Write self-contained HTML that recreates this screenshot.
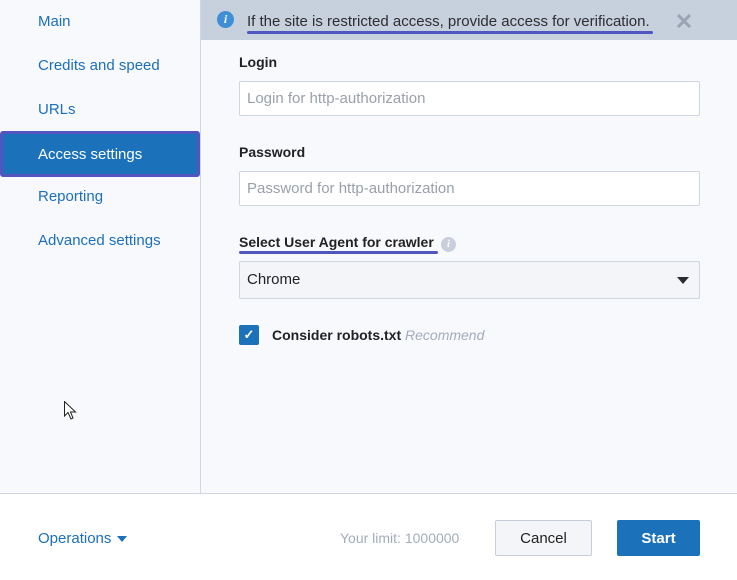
<!DOCTYPE html>
<html><head><style>
*{margin:0;padding:0;box-sizing:border-box}
body{width:737px;height:580px;overflow:hidden;background:#f8f9fd;font-family:"Liberation Sans",sans-serif;position:relative}
.side{position:absolute;left:0;top:0;width:201px;height:493px;border-right:1px solid #cfd6e2;background:#f8f9fd}
.side a{position:absolute;left:38px;font-size:15px;color:#1c6fbb}
.active{position:absolute;left:0;top:131px;width:200px;height:46px;background:#1c71bb;border:3px solid #5254c0;border-radius:3px}
.active span{position:absolute;left:35px;top:12px;color:#fff;font-size:15px}
.banner{position:absolute;left:201px;top:0;width:536px;height:40px;background:#c7d0dd}
.t{position:absolute;font-size:15px;color:#2d2d33}
.lbl{position:absolute;left:239px;font-size:14px;font-weight:bold;color:#222}
.inp{position:absolute;left:239px;width:461px;height:35px;border:1px solid #cfd5df;background:#fff;border-radius:2px;font-size:15px;color:#9aa0aa;padding:8px 7px}
.foot{position:absolute;left:0;top:493px;width:737px;height:87px;background:#fff;border-top:1px solid #cfd6e2}
</style></head><body>
<div class="side">
<a style="top:13px">Main</a>
<a style="top:57px">Credits and speed</a>
<a style="top:101px">URLs</a>
<a style="top:188px">Reporting</a>
<a style="top:232px">Advanced settings</a>
</div>
<div class="active"><span>Access settings</span></div>
<div class="banner">
<div style="position:absolute;left:16px;top:11px;width:17px;height:17px;border-radius:50%;background:#3f8ed6;color:#fff;font:italic bold 12px 'Liberation Serif',serif;text-align:center;line-height:17px">i</div>
<div class="t" style="left:46px;top:13px;font-size:15px">If the site is restricted access, provide access for verification.</div>
<div style="position:absolute;left:46px;top:31px;width:406px;height:3px;background:#5056c0;border-radius:2px"></div>
<svg style="position:absolute;left:476px;top:14px" width="14" height="14" viewBox="0 0 14 14"><path d="M1 1L13 13M13 1L1 13" stroke="#9aa4b3" stroke-width="3"/></svg>
</div>
<div class="lbl" style="top:54px">Login</div>
<div class="inp" style="top:81px">Login for http-authorization</div>
<div class="lbl" style="top:144px">Password</div>
<div class="inp" style="top:171px">Password for http-authorization</div>
<div class="lbl" style="top:234px">Select User Agent for crawler</div>
<div style="position:absolute;left:239px;top:251px;width:199px;height:3px;background:#5056c0;border-radius:2px"></div>
<div style="position:absolute;left:441px;top:237px;width:15px;height:15px;border-radius:50%;background:#c8cfda;color:#fff;font:italic bold 11px 'Liberation Serif',serif;text-align:center;line-height:15px">i</div>
<div class="inp" style="top:261px;height:38px;background:#f4f5f8;color:#222;padding-top:9px">Chrome</div>
<div style="position:absolute;left:677px;top:277px;border-left:6px solid transparent;border-right:6px solid transparent;border-top:7px solid #2a2a30"></div>
<div style="position:absolute;left:239px;top:325px;width:20px;height:20px;background:#1c71bb;border-radius:2px;color:#fff;font-size:13px;text-align:center;line-height:20px;font-weight:bold">✓</div>
<div class="lbl" style="left:272px;top:327px">Consider robots.txt <i style="font-weight:normal;color:#a4acba">Recommend</i></div>
<svg style="position:absolute;left:64px;top:401px" width="13" height="19" viewBox="0 0 13 19"><path d="M0.5 0.5L0.5 15L4 11.5L7 18L9 17L6.5 11L11.5 11Z" fill="#fff" stroke="#222" stroke-width="1"/></svg>
<div class="foot">
<div style="position:absolute;left:38px;top:36px;font-size:15px;color:#1c6fbb">Operations</div>
<div style="position:absolute;left:117px;top:42px;border-left:5px solid transparent;border-right:5px solid transparent;border-top:6px solid #1c6fbb"></div>
<div style="position:absolute;left:340px;top:36px;font-size:14px;color:#a4acba">Your limit: 1000000</div>
<div style="position:absolute;left:495px;top:26px;width:97px;height:36px;border:1px solid #c7ceda;background:#f4f5f8;border-radius:2px;text-align:center;line-height:36px;font-size:15px;color:#222">Cancel</div>
<div style="position:absolute;left:617px;top:26px;width:83px;height:36px;background:#1c71bb;border-radius:2px;text-align:center;line-height:38px;font-size:15px;color:#fff;font-weight:bold">Start</div>
</div>
</body></html>
